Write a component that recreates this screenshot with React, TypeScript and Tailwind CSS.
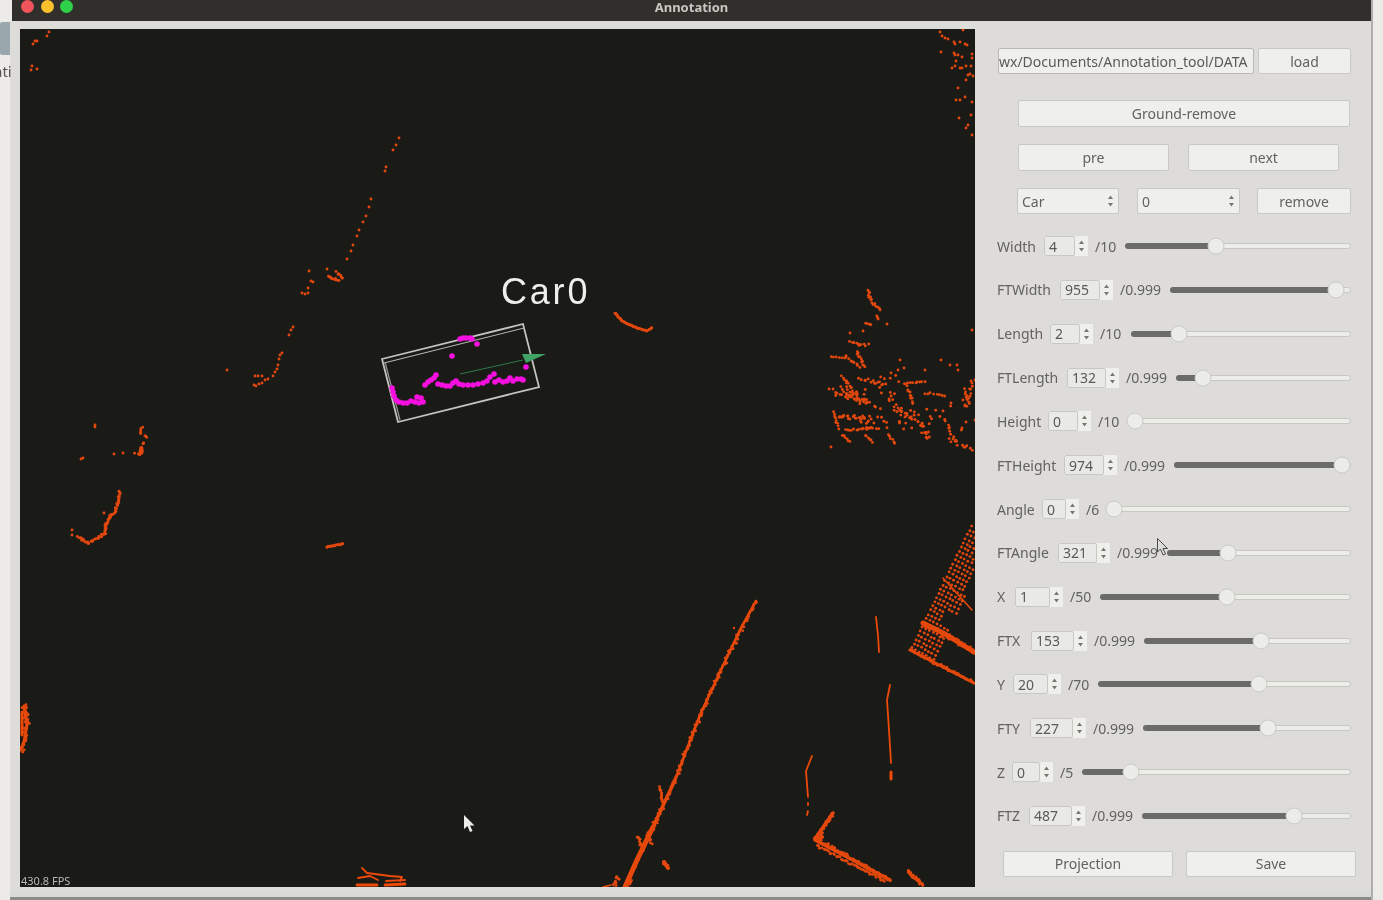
import React from "react";

type P = [number, number];

// small seeded generator so the point cloud stays the same between runs
let seed = 17;
const rnd = () => {
  seed = (seed * 16807) % 2147483647;
  return seed / 2147483647;
};

const trail = (pts: P[], step: number, jitter: number): P[] => {
  const out: P[] = [];
  for (let i = 0; i < pts.length - 1; i++) {
    const [x1, y1] = pts[i];
    const [x2, y2] = pts[i + 1];
    const n = Math.max(1, Math.round(Math.hypot(x2 - x1, y2 - y1) / step));
    for (let k = 0; k <= n; k++) {
      out.push([
        x1 + ((x2 - x1) * k) / n + (rnd() - 0.5) * jitter,
        y1 + ((y2 - y1) * k) / n + (rnd() - 0.5) * jitter,
      ]);
    }
  }
  return out;
};

const scatter = (x: number, y: number, w: number, h: number, n: number): P[] =>
  Array.from({ length: n }, () => [x + rnd() * w, y + rnd() * h] as P);

const sparse: P[] = [
  [49, 32], [47, 36], [37, 41], [33, 44], [35, 41], [32, 66], [31, 70], [37, 69],
  [399, 138], [396, 145], [393, 150], [386, 167], [385, 171], [371, 199], [369, 207], [366, 216],
  [363, 222], [359, 230], [357, 236], [353, 245], [351, 251], [347, 259], [327, 269], [309, 271],
  [311, 281], [313, 282], [308, 288], [302, 293], [305, 294], [308, 293], [293, 327], [291, 330], [289, 335],
  [282, 353], [280, 355], [279, 359], [278, 365], [277, 369], [275, 372], [273, 376], [268, 379], [265, 380],
  [262, 376], [258, 376], [255, 376], [262, 383], [259, 384], [254, 385], [256, 386], [227, 370],
  [95, 427], [95, 425], [81, 459], [83, 458], [114, 454], [123, 453],
  [940, 32], [942, 36], [945, 38], [948, 39], [963, 30], [954, 42], [955, 44], [960, 42], [965, 44], [967, 45],
  [941, 52], [954, 53], [955, 55], [958, 55], [962, 57], [972, 54], [972, 58], [956, 61], [966, 66], [971, 66],
  [952, 68], [955, 66], [960, 68], [962, 68], [968, 75], [970, 74], [973, 76], [966, 80], [958, 88], [960, 100],
  [956, 100], [965, 97], [972, 102], [959, 118], [971, 115], [966, 128], [968, 125], [972, 135],
  ...trail([[337, 272], [343, 278]], 1.5, 2),
  ...trail([[328, 277], [339, 280]], 1.3, 1.5),
];

const rightCluster: P[] = [
  ...trail([[868, 290], [870, 298], [875, 305], [880, 310]], 1.8, 2.5),
  ...trail([[877, 316], [878, 319]], 2, 0.5),
  ...trail([[866, 323], [871, 325]], 2, 0.5),
  [887, 324], [863, 331], [850, 333],
  ...trail([[850, 341], [858, 345], [868, 345]], 2, 2),
  ...trail([[857, 351], [865, 368]], 1.8, 3),
  ...trail([[831, 357], [845, 358]], 3, 0.8),
  ...trail([[845, 356], [860, 367]], 2.4, 2),
  ...trail([[843, 378], [858, 395]], 1.4, 5),
  ...trail([[860, 378], [885, 385]], 2.2, 3),
  ...trail([[840, 390], [870, 405]], 1.8, 7),
  [829, 389], [833, 389],
  ...trail([[835, 395], [868, 398]], 2, 7),
  ...trail([[833, 412], [838, 428]], 2, 2),
  ...trail([[838, 415], [870, 420]], 1.6, 4),
  ...trail([[845, 430], [878, 428]], 2.4, 2),
  ...trail([[842, 435], [850, 442]], 2, 1.5),
  ...trail([[865, 435], [873, 442]], 2, 1.5),
  ...trail([[888, 435], [895, 443]], 2, 1.5),
  ...trail([[905, 385], [910, 395], [913, 404]], 2.2, 3),
  ...trail([[905, 384], [925, 382]], 2.4, 2),
  ...trail([[895, 408], [915, 420]], 2, 4),
  ...trail([[915, 415], [930, 440]], 1.8, 7),
  ...trail([[925, 393], [945, 395]], 3, 2),
  ...trail([[945, 420], [955, 440]], 2.4, 3),
  ...trail([[950, 440], [975, 450]], 2.4, 4),
  ...trail([[965, 390], [968, 405]], 2.4, 3),
  ...trail([[968, 403], [972, 383]], 2.4, 3),
  ...scatter(842, 375, 60, 55, 45),
  ...scatter(900, 395, 70, 40, 18),
  [900, 360], [891, 373], [898, 370], [904, 368], [925, 370], [941, 360], [950, 365], [958, 370], [972, 330], [957, 365],
  [971, 381], [951, 403], [943, 411], [965, 405], [831, 447], [966, 422], [962, 428], [975, 420], [975, 380],
];

const smears: P[] = [
  ...trail([[142, 428], [140, 433]], 1.2, 1.5),
  ...trail([[145, 436], [147, 437]], 1.2, 0.8),
  ...trail([[143, 443], [142, 448], [140, 454], [136, 454]], 1, 3),
  ...trail([[120, 492], [117, 505], [115, 512], [110, 517], [106, 525], [105, 533]], 1, 2),
  ...trail([[105, 533], [98, 538], [88, 543], [78, 537]], 1.2, 2),
  [72, 530], [72, 535], [104, 513],
  ...trail([[327, 547], [343, 544]], 1, 0.8),
  ...trail([[615, 313], [622, 321], [630, 325], [637, 328], [647, 331], [652, 328]], 1, 0.8),
];

// the grid of facade returns on the right edge
const grid: P[] = [];
for (let i = 0; i < 30; i++) {
  for (let j = 0; j < 7; j++) {
    const x = 912 + i * 2.05 + j * 3.6;
    const y = 648 - i * 4.2 + j * 1.9;
    const gap = i > 7 && i < 11 && j > 3;
    if (x < 975 && !gap && !(i > 15 && j > 5)) grid.push([x + (rnd() - 0.5), y + (rnd() - 0.5)]);
  }
}

// rough edges for the strong returns
const rough: P[] = [
  ...trail([[756, 601], [720, 672], [700, 715], [675, 780], [653, 827], [637, 860], [627, 887]], 2, 3.5),
  ...trail([[910, 650], [974, 683]], 1.6, 2.5),
  ...trail([[923, 623], [974, 652]], 1.4, 5),
  ...trail([[833, 813], [817, 838]], 1.5, 3),
  ...trail([[815, 838], [890, 880]], 1.5, 3),
  ...trail([[817, 846], [885, 881]], 1.8, 2),
  ...trail([[908, 872], [923, 885]], 1.5, 3),
  ...trail([[24, 706], [27, 725], [24, 742], [21, 750]], 1.2, 5),
  ...scatter(816, 830, 7, 10, 14),
  ...trail([[660, 787], [663, 803]], 1.5, 2),
  ...trail([[638, 837], [643, 850]], 1.5, 2),
  ...trail([[648, 838], [652, 843]], 1.5, 2),
  ...trail([[664, 862], [668, 868]], 1, 4),
  ...trail([[618, 877], [614, 886]], 1, 4),
];

const thick: { d: string; w: number }[] = [
  { d: "M910 650 L974 683", w: 3 },
  { d: "M923 623 L945 634 L974 652", w: 5 },
  { d: "M943 578 L972 610", w: 1.5 },
  { d: "M876 617 L878 635 L879 652", w: 1.8 },
  { d: "M890 685 L887 700 L889 730 L891 763", w: 1.8 },
  { d: "M891 772 L891 779", w: 3 },
  { d: "M812 756 L806 771 L808 797", w: 1.8 },
  { d: "M808 803 L808 805 M808 811 L807 815", w: 1.8 },
  { d: "M833 813 L817 836 L815 840 L834 850 L890 880", w: 3.5 },
  { d: "M908 872 L914 878 L923 885", w: 2.5 },
  { d: "M756 601 L740 630 L720 672 L700 715 L675 780", w: 2.6 },
  { d: "M675 780 L653 827", w: 3.4 },
  { d: "M653 827 L637 860 L625 887", w: 5 },
  { d: "M660 787 L663 803", w: 1.5 },
  { d: "M638 837 L643 850", w: 2 },
  { d: "M664 862 L668 868", w: 4 },
  { d: "M362 868 L367 873 L390 876 L402 877 L400 881", w: 1.8 },
  { d: "M358 878 L370 876 L378 880", w: 1.8 },
  { d: "M386 881 L405 880", w: 1.8 },
  { d: "M357 885 L377 885 M385 885 L405 884", w: 2.8 },
  { d: "M24 706 L27 725 L24 742 L21 750", w: 3 },
  { d: "M22 712 L22 735", w: 3 },
  { d: "M611 885 L603 887", w: 1.5 },
];

// scalloped smear of the car's returns
const magentaBlobs: P[] = [
  [425, 385], [428, 382], [431, 380], [434, 378], [436, 375], [438, 384], [442, 385], [446, 386], [450, 386],
  [453, 383], [456, 381], [459, 384], [463, 385], [468, 385], [473, 385], [478, 384], [483, 383], [487, 381],
  [490, 377], [494, 374], [495, 382], [499, 380], [503, 382], [507, 381], [510, 378], [513, 381], [517, 379], [521, 379], [523, 380],
  [460, 339], [463, 338], [466, 338], [470, 338], [472, 339],
  [392, 388], [393, 392], [394, 396], [396, 400], [399, 402], [403, 403], [407, 403], [411, 401], [415, 402], [419, 403], [423, 402], [421, 398], [417, 397],
  [477, 344], [452, 356], [526, 367],
];

const pointsCloud: P[] = [...sparse, ...rightCluster, ...smears, ...grid, ...rough];

const sliders = [
  { label: "Width", lw: "w-[47px]", value: "4", spin: "w-[44px]", max: "/10", sw: "w-[30px]", pct: 40 },
  { label: "FTWidth", lw: "w-[63px]", value: "955", spin: "w-[53px]", max: "/0.999", sw: "w-[50px]", pct: 92.3 },
  { label: "Length", lw: "w-[53px]", value: "2", spin: "w-[43px]", max: "/10", sw: "w-[31px]", pct: 21.5 },
  { label: "FTLength", lw: "w-[70px]", value: "132", spin: "w-[52px]", max: "/0.999", sw: "w-[50px]", pct: 14.9 },
  { label: "Height", lw: "w-[51px]", value: "0", spin: "w-[43px]", max: "/10", sw: "w-[31px]", pct: 2.2 },
  { label: "FTHeight", lw: "w-[67px]", value: "974", spin: "w-[53px]", max: "/0.999", sw: "w-[50px]", pct: 95.7 },
  { label: "Angle", lw: "w-[45px]", value: "0", spin: "w-[37px]", max: "/6", sw: "w-[22px]", pct: 2 },
  { label: "FTAngle", lw: "w-[61px]", value: "321", spin: "w-[52px]", max: "/0.999", sw: "w-[50px]", pct: 32.9 },
  { label: "X", lw: "w-[18px]", value: "1", spin: "w-[48px]", max: "/50", sw: "w-[30px]", pct: 50.6 },
  { label: "FTX", lw: "w-[34px]", value: "153", spin: "w-[56px]", max: "/0.999", sw: "w-[50px]", pct: 56.8 },
  { label: "Y", lw: "w-[16px]", value: "20", spin: "w-[48px]", max: "/70", sw: "w-[30px]", pct: 63.8 },
  { label: "FTY", lw: "w-[33px]", value: "227", spin: "w-[56px]", max: "/0.999", sw: "w-[50px]", pct: 60.1 },
  { label: "Z", lw: "w-[15px]", value: "0", spin: "w-[41px]", max: "/5", sw: "w-[22px]", pct: 17.8 },
  { label: "FTZ", lw: "w-[32px]", value: "487", spin: "w-[56px]", max: "/0.999", sw: "w-[50px]", pct: 73 },
];

const Arrows = () => (
  <svg width="7" height="14" viewBox="0 0 7 14" className="shrink-0">
    <path d="M3.5 1.5 L6 5 L1 5 Z M3.5 12.5 L6 9 L1 9 Z" fill="#77776f" />
  </svg>
);

const Btn = ({ children, className }: { children: React.ReactNode; className: string }) => (
  <button className={`flex items-center justify-center rounded-[2px] border border-[#c9c9c4] bg-[#efefec] text-[14px] text-[#62625e] ${className}`}>
    {children}
  </button>
);

const Select = ({ text, className }: { text: string; className: string }) => (
  <div className={`flex h-[26px] items-center justify-between rounded-[2px] border border-[#c9c9c4] bg-[#efefec] pl-[4px] pr-[4px] text-[14px] text-[#62625e] ${className}`}>
    <span>{text}</span>
    <Arrows />
  </div>
);

const SliderRow = ({ s }: { s: (typeof sliders)[number] }) => (
  <div className="flex h-[26px] items-center pl-[22px] pr-[20px] text-[14px] text-[#62625e]">
    <span className={`shrink-0 ${s.lw}`}>{s.label}</span>
    <div className={`flex h-[20px] shrink-0 items-center bg-[#efefec] ${s.spin}`}>
      <div className="flex h-full flex-1 items-center rounded-[2px] border border-[#c9c9c4] bg-[#e9e9e6] pl-[4px] text-[#5a5a56]">{s.value}</div>
      <div className="flex w-[13px] justify-center"><Arrows /></div>
    </div>
    <span className={`ml-[7px] shrink-0 ${s.sw}`}>{s.max}</span>
    <div className="relative h-[6px] flex-1 rounded-full border border-[#c8c8c3] bg-[#edede9]">
      <div className="absolute -left-px -top-px h-[6px] rounded-full bg-[#6b6b67]" style={{ width: `${s.pct}%` }} />
      <div
        className="absolute top-1/2 h-[17px] w-[17px] -translate-x-1/2 -translate-y-1/2 rounded-full border border-[#cbcbc6] bg-[#ecece9]"
        style={{ left: `${s.pct}%` }}
      />
    </div>
  </div>
);

const PointCloud = () => (
  <svg viewBox="20 29 955 858" width="955" height="858" className="block">
    {thick.map((t, i) => (
      <path key={i} d={t.d} fill="none" stroke="#ee4a0a" strokeWidth={t.w} strokeLinecap="round" strokeLinejoin="round" />
    ))}
    {pointsCloud.map(([x, y], i) => (
      <circle key={i} cx={x} cy={y} r="1.45" fill="#e2480e" />
    ))}
    <circle cx="734" cy="628" r="1.2" fill="#e2480e" />

    {/* bounding box */}
    <path d="M382 359 L523 324 L539 387 L398 422 Z" fill="none" stroke="#c4c4c0" strokeWidth="1.8" />
    <path d="M384 363 L524 328" fill="none" stroke="#b4b4b0" strokeWidth="1.2" />
    <path d="M385 362 L400 420" fill="none" stroke="#9a9a96" strokeWidth="1.2" />

    {/* heading arrow */}
    <path d="M460 374 L523 360" stroke="#2f7a4d" strokeWidth="1" />
    <path d="M522 354 L546 354 L526 363 Z" fill="#3fa266" />

    {magentaBlobs.map(([x, y], i) => (
      <circle key={i} cx={x} cy={y} r="2.8" fill="#f510e0" />
    ))}

    <text x="501" y="304" fill="#eeeeea" fontSize="36" letterSpacing="2.8" fontFamily="'Liberation Sans', sans-serif">Car0</text>
    <text x="21" y="885" fill="#b8b8b4" fontSize="11" fontFamily="'Noto Sans', sans-serif">430.8 FPS</text>
  </svg>
);

export default function App() {
  return (
    <div className="relative flex h-[900px] w-[1383px] overflow-hidden bg-[#ecebe8] blur-[0.4px] font-['Noto_Sans',sans-serif]">
      {/* what shows of the window behind */}
      <div className="flex w-[10px] shrink-0 flex-col">
        <div className="mt-[22px] h-[33px] w-[11px] rounded-l-[2px] bg-[#9aa8ad]" />
        <span className="z-10 -ml-[6px] mt-[6px] text-[15px] leading-5 text-[#55554f]">ati</span>
      </div>

      <div className="flex min-w-0 flex-1 flex-col">
        <div className="relative ml-[2px] flex h-[21px] shrink-0 justify-center bg-[#302f2b]">
          <div className="absolute left-[9px] top-0 flex gap-[6.5px]">
            <span className="h-[13px] w-[13px] rounded-full bg-[#f0555c]" />
            <span className="h-[13px] w-[13px] rounded-full bg-[#fbc12d]" />
            <span className="h-[13px] w-[13px] rounded-full bg-[#2ed04a]" />
          </div>
          <span className="text-[13px] font-bold leading-[14px] text-[#c8c7c2]">Annotation</span>
        </div>

        <div className="flex flex-1 bg-[#dddcd8]">
          <div className="pl-[10px] pt-[8px]">
            <div className="h-[858px] w-[955px] overflow-hidden bg-[#1a1a17]">
              <PointCloud />
            </div>
          </div>

          <div className="flex w-[396px] flex-col pt-[27px]">
            <div className="ml-[23px] flex h-[26px] gap-[4px]">
              <div className="flex w-[256px] items-center overflow-hidden whitespace-nowrap rounded-[2px] border border-[#b9b9b4] bg-[#efefec] text-[14px] text-[#5a5a56]">
                wx/Documents/Annotation_tool/DATA
              </div>
              <Btn className="w-[93px]">load</Btn>
            </div>
            <Btn className="ml-[43px] mt-[26px] h-[27px] w-[332px]">Ground-remove</Btn>
            <div className="ml-[43px] mt-[17px] flex h-[27px] gap-[19px]">
              <Btn className="w-[151px]">pre</Btn>
              <Btn className="w-[151px]">next</Btn>
            </div>
            <div className="ml-[42px] mt-[17px] flex gap-[18px]">
              <Select text="Car" className="w-[102px]" />
              <Select text="0" className="w-[103px]" />
              <Btn className="ml-[-1px] h-[26px] w-[94px]">remove</Btn>
            </div>

            <div className="mt-[19px] flex flex-col gap-[17.85px]">
              {sliders.map((s) => (
                <SliderRow key={s.label} s={s} />
              ))}
            </div>

            <div className="ml-[28px] mt-[22px] flex h-[26px] gap-[13px]">
              <Btn className="w-[170px]">Projection</Btn>
              <Btn className="w-[170px]">Save</Btn>
            </div>
          </div>
        </div>

        <div className="h-[7px] shrink-0 border-b-[3px] border-[#8b8b87] bg-[#d9d9d5]" />
      </div>

      <div className="w-[12px] shrink-0 border-l-[2px] border-[#aeaeaa]" />

      {/* mouse cursors caught in the recording */}
      <svg width="13" height="20" viewBox="0 0 13 20" className="absolute left-[464px] top-[815px]">
        <path d="M0 0 L0 14 L3.5 11 L6 17 L8.5 16 L6 10.5 L10.5 10.5 Z" fill="#ecece8" />
      </svg>
      <svg width="13" height="20" viewBox="0 0 13 20" className="absolute left-[1157px] top-[538px]">
        <path d="M0.5 0.5 L0.5 14 L3.5 11 L6 17 L8.5 16 L6 10.5 L10.5 10.5 Z" fill="#dcdcd8" stroke="#4a4a48" strokeWidth="1" />
      </svg>
    </div>
  );
}
